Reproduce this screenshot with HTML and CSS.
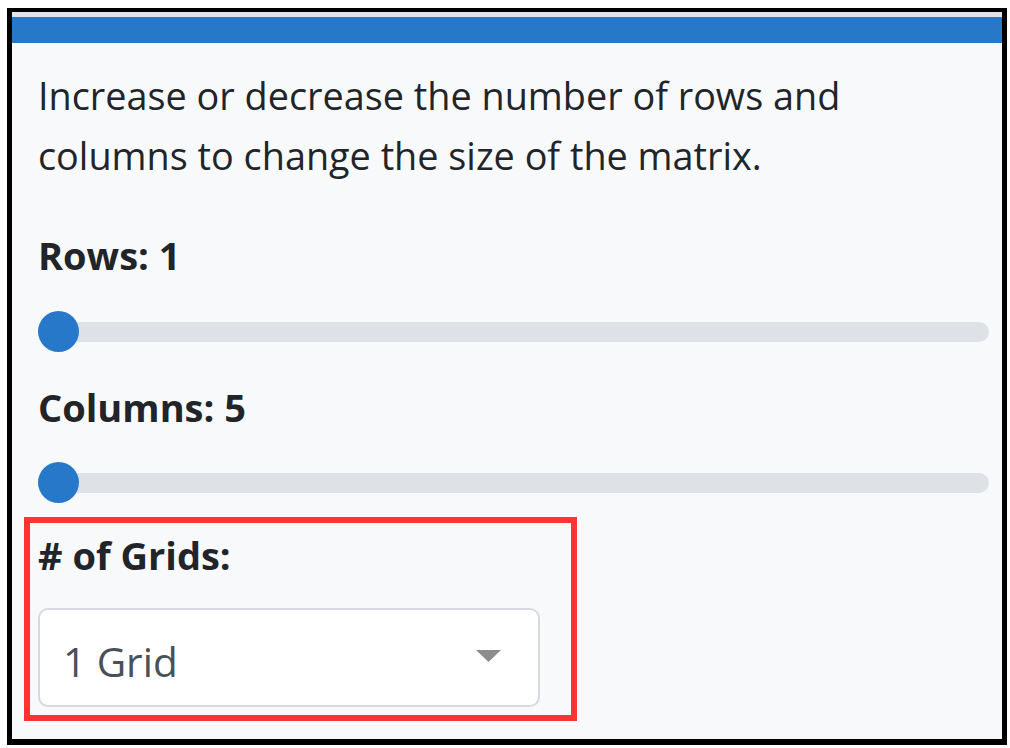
FILE: index.html
```html
<!DOCTYPE html>
<html lang="en">
<head>
<meta charset="utf-8">
<title>Matrix settings</title>
<link rel="stylesheet" href="styles.css">
</head>
<body>
<div class="frame">
  <div class="topbar"></div>
  <div class="content">
    <p class="intro">Increase or decrease the number of rows and columns to change the size of the matrix.</p>
    <label class="field-label" for="rows">Rows: 1</label>
    <input class="range" id="rows" type="range" min="1" max="10" value="1">
    <label class="field-label field-label--cols" for="cols">Columns: 5</label>
    <input class="range" id="cols" type="range" min="5" max="10" value="5">
    <div class="highlight">
      <label class="field-label field-label--grids" for="grids"># of Grids:</label>
      <div class="select-wrap">
        <select class="select" id="grids">
          <option>1 Grid</option>
          <option>2 Grids</option>
        </select>
        <svg class="caret" width="25" height="12" viewBox="0 0 25 12"><polygon points="0,0 25,0 12.5,12" fill="#8c8c8c"/></svg>
      </div>
    </div>
  </div>
</div>
</body>
</html>
```

FILE: styles.css
```css
html, body {
  margin: 0;
  padding: 0;
  background: #ffffff;
}

.frame {
  box-sizing: border-box;
  margin: 8px 0 0 7px;
  width: 1000px;
  height: 737px;
  border-style: solid;
  border-color: #000000;
  border-width: 4px 5px 6px 5px;
  background: #f8f9fa;
  display: flex;
  flex-direction: column;
  font-family: "Open Sans", "Noto Sans", sans-serif;
  color: #212529;
}

.topbar {
  height: 26px;
  border-top: 5px solid #e0e4ea;
  background: #2878c9;
  flex: none;
}

.content {
  padding: 0 13px 0 26px;
  display: flex;
  flex-direction: column;
  align-items: flex-start;
}

.intro {
  margin: 23px 0 0 0;
  font-size: 37.8px;
  line-height: 60px;
  width: 860px;
}

.field-label {
  margin-top: 39px;
  font-size: 38px;
  font-weight: 700;
  line-height: 60px;
}

.field-label--cols {
  margin-top: 25px;
}

.field-label--grids {
  margin-top: 0;
}

.range {
  -webkit-appearance: none;
  appearance: none;
  display: block;
  margin: 26px 0 0 0;
  padding: 0;
  width: 951px;
  height: 41px;
  background: transparent;
}

.range::-webkit-slider-runnable-track {
  height: 20px;
  border-radius: 10px;
  background: #dee2e6;
}

.range::-webkit-slider-thumb {
  -webkit-appearance: none;
  appearance: none;
  width: 41px;
  height: 41px;
  margin-top: -10.5px;
  border: none;
  border-radius: 50%;
  background: #2878c9;
}

#cols {
  margin-top: 25px;
}

.highlight {
  margin: 14px 0 0 -14px;
  box-sizing: border-box;
  width: 553px;
  height: 204px;
  border: 6px solid #ff3333;
  padding: 2px 8px 8px 8px;
  display: flex;
  flex-direction: column;
  align-items: flex-start;
}

.select-wrap {
  position: relative;
  margin-top: 23px;
}

.select {
  -webkit-appearance: none;
  appearance: none;
  display: block;
  box-sizing: border-box;
  width: 502px;
  height: 99px;
  border: 2px solid #d6dadf;
  border-radius: 10px;
  background: #ffffff;
  padding: 8px 0 0 23px;
  font-family: "Open Sans", "Noto Sans", sans-serif;
  font-size: 40.5px;
  color: #495057;
}

.caret {
  position: absolute;
  left: 438px;
  top: 42px;
}
```
